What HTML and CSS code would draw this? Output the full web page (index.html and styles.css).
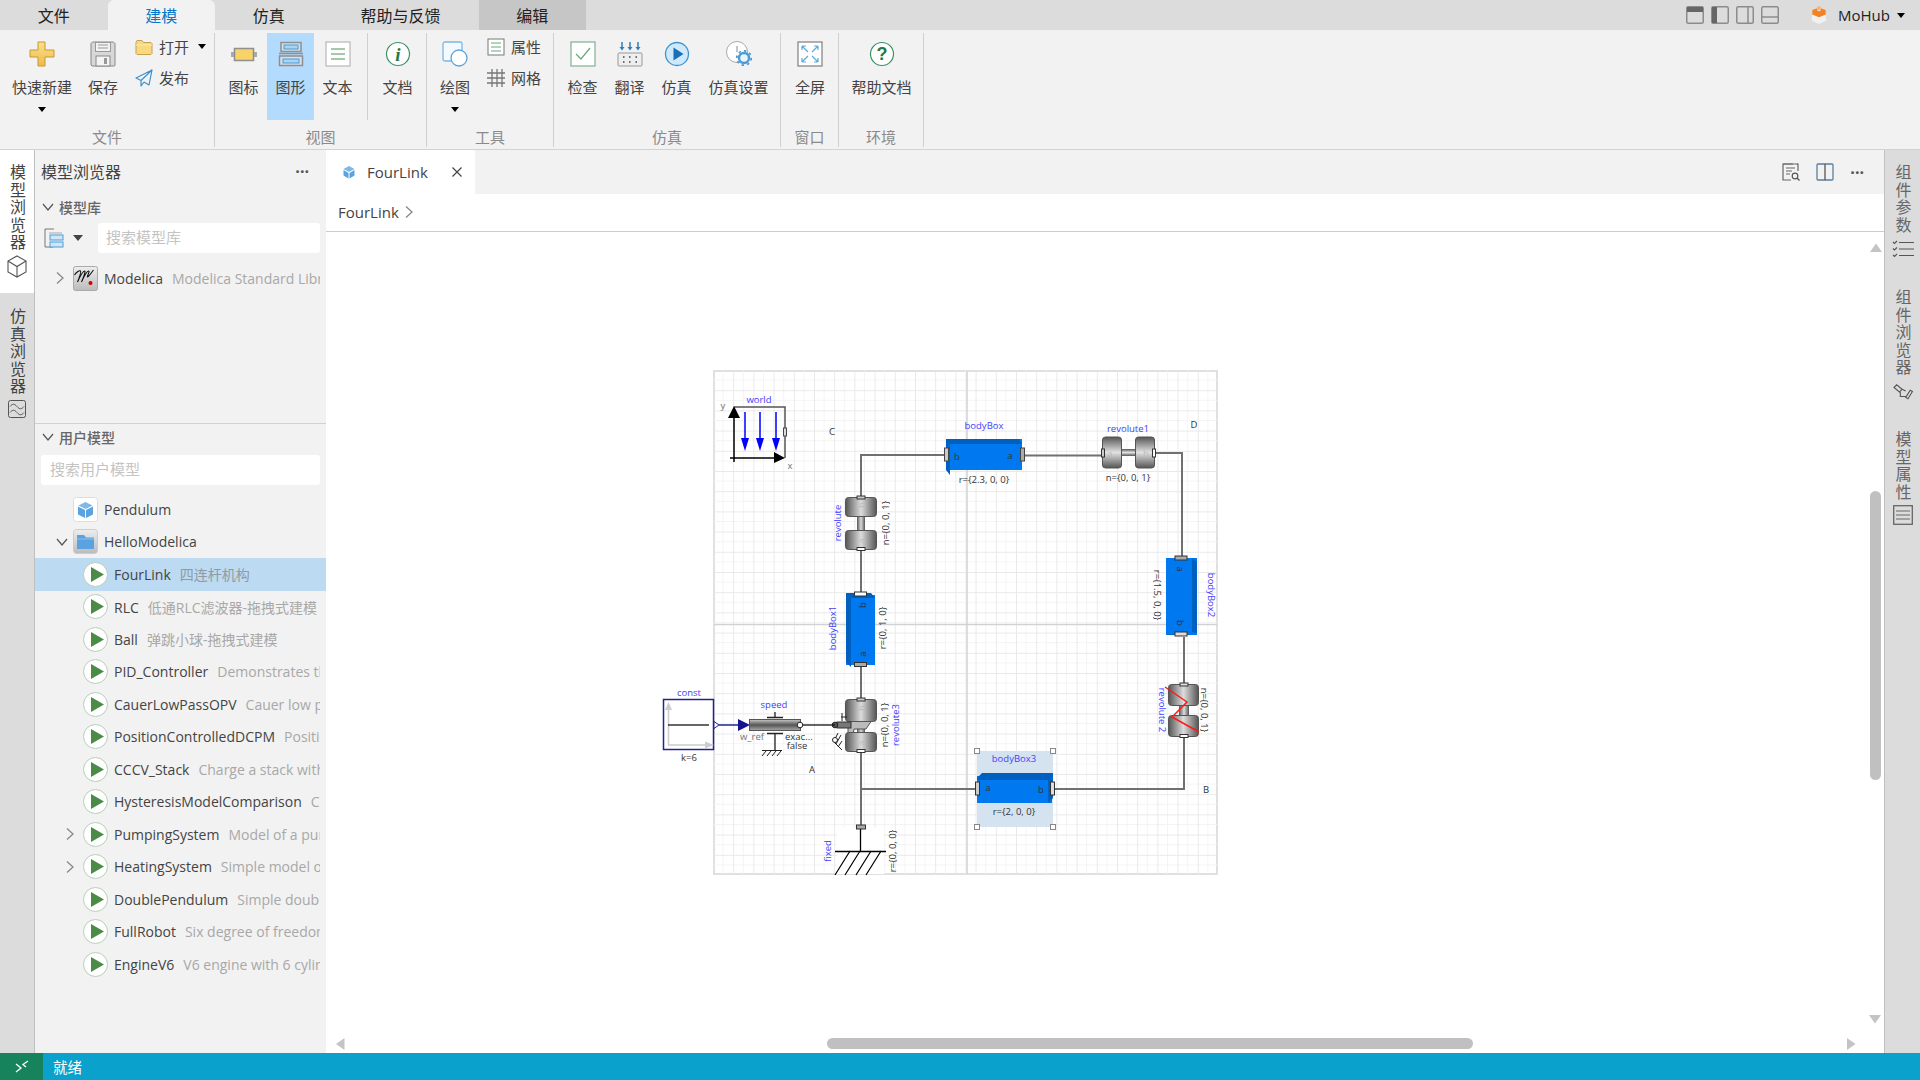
FILE: index.html
```html
<!DOCTYPE html>
<html lang="zh">
<head>
<meta charset="utf-8">
<title>FourLink</title>
<link rel="stylesheet" href="styles.css">
</head>
<body>
<svg class="defs" width="0" height="0">
  <defs>
    <symbol id="play" viewBox="0 0 25 25"><circle cx="12.5" cy="12.5" r="12" fill="#fff" stroke="#b5d0b5"/><path d="M8 5l13 7.5L8 20z" fill="#4a8c47"/></symbol>
    <symbol id="chev-r" viewBox="0 0 10 14"><path d="M2 1.5l6 5.5-6 5.5" fill="none" stroke="#888" stroke-width="1.3"/></symbol>
    <symbol id="chev-d" viewBox="0 0 14 10"><path d="M2 2l5 6 5-6" fill="none" stroke="#555" stroke-width="1.2"/></symbol>
  </defs>
</svg>

<header class="tabbar">
  <div class="tab">文件</div>
  <div class="tab tab-active">建模</div>
  <div class="tab">仿真</div>
  <div class="tab tab-wide">帮助与反馈</div>
  <div class="tab tab-context">编辑</div>
  <div class="tabbar-right">
    <svg class="win-ico" viewBox="0 0 18 18"><rect x=".75" y=".75" width="16.5" height="16.5" rx="1.5" fill="none" stroke="#8c8c8c" stroke-width="1.5"/><rect x="1" y="1" width="16" height="5" fill="#666"/></svg>
    <svg class="win-ico" viewBox="0 0 18 18"><rect x=".75" y=".75" width="16.5" height="16.5" rx="1.5" fill="none" stroke="#8c8c8c" stroke-width="1.5"/><rect x="1" y="1" width="5" height="16" fill="#666"/></svg>
    <svg class="win-ico" viewBox="0 0 18 18"><rect x=".75" y=".75" width="16.5" height="16.5" rx="1.5" fill="none" stroke="#8c8c8c" stroke-width="1.5"/><path d="M12 1v16" stroke="#8c8c8c" stroke-width="1.5"/></svg>
    <svg class="win-ico" viewBox="0 0 18 18"><rect x=".75" y=".75" width="16.5" height="16.5" rx="1.5" fill="none" stroke="#8c8c8c" stroke-width="1.5"/><path d="M1 11h16" stroke="#8c8c8c" stroke-width="1.5"/></svg>
    <svg class="logo" viewBox="0 0 18 20"><path d="M9 7l8 3.500v6L9 20l-8-3.500v-6z" fill="#f1f1f1"/><path d="M1.500 4.500L7 2.500v2.400L9 6l2-1.100V2.500l5.500 2v5l-7.500 3-7.500-3z" fill="#f58220"/><path d="M7 .5h4v3l-2 1-2-1z" fill="#f9b16e"/></svg>
    <span class="hub-name">MoHub</span>
    <span class="caret caret-black"></span>
  </div>
</header>

<section class="ribbon">
  <div class="rgroup rg-file">
    <div class="rgroup-body">
      <div class="rbtn rb-84">
        <svg class="ricon" viewBox="0 0 26 26"><defs><linearGradient id="gold" x1="0" y1="0" x2="0" y2="1"><stop offset="0" stop-color="#fbe08c"/><stop offset="1" stop-color="#eebb4c"/></linearGradient></defs><path d="M9 1h7v8h9v7h-9v9H9v-9H1V9h8z" fill="url(#gold)" stroke="#c9982e"/></svg>
        <span>快速新建</span><span class="caret caret-black caret-mt"></span>
      </div>
      <div class="rbtn rb-38">
        <svg class="ricon" viewBox="0 0 26 26"><path d="M2.500 1h21l1.500 1.500v22l-1 .5H2l-1-1V2.500z" fill="#d8d8d8" stroke="#888"/><rect x="5.500" y="1.500" width="15" height="9" fill="#f2f2f2" stroke="#999"/><path d="M8 4h10M8 7h10" stroke="#999"/><rect x="6" y="15" width="14" height="10" fill="#f4f4f4" stroke="#888"/><rect x="14" y="17" width="3" height="6" fill="#999"/></svg>
        <span>保存</span>
      </div>
      <div class="rsmall-col rs-file">
        <div class="rsmall">
          <svg class="sicon" viewBox="0 0 18 16"><path d="M1 3.500L2 1.500h5l1.500 2H16l1 1v10l-1 1H2l-1-1z" fill="#f8d97f" stroke="#c9a04a"/><path d="M1 6h16" stroke="#fbeab5"/></svg>
          <span>打开</span><span class="caret caret-black caret-ml"></span>
        </div>
        <div class="rsmall">
          <svg class="sicon" viewBox="0 0 18 18"><path d="M17 1L1 9l5 2.500zM17 1L6 11.500V17l3-4M17 1l-3 15-5-3" fill="none" stroke="#3b92d0" stroke-width="1.200" stroke-linejoin="round"/></svg>
          <span>发布</span>
        </div>
      </div>
    </div>
    <div class="rgroup-label">文件</div>
  </div>

  <div class="rgroup rg-view">
    <div class="rgroup-body">
      <div class="rbtn rb-47">
        <svg class="ricon" viewBox="0 0 26 26"><rect x="0" y="11" width="26" height="5" fill="#aaa"/><rect x="3.500" y="7.500" width="19" height="12" fill="#f7d36a" stroke="#8f8f8f" stroke-width="1.500"/></svg>
        <span>图标</span>
      </div>
      <div class="rbtn rb-47 rbtn-on">
        <svg class="ricon" viewBox="0 0 26 26"><path d="M3 1.500h20v9H3zM1.500 15h23v9.500h-23z" fill="#d6e0e8" stroke="#8f8f8f" stroke-width="1.500"/><path d="M1 12.500h24" stroke="#8f8f8f" stroke-width="1.500"/><rect x="6" y="4" width="14" height="4" fill="#a9d4f3" stroke="#4d9bd3"/><rect x="5" y="18" width="16" height="4" fill="#a9d4f3" stroke="#4d9bd3"/></svg>
        <span>图形</span>
      </div>
      <div class="rbtn rb-47">
        <svg class="ricon" viewBox="0 0 26 26"><rect x="1" y="1" width="24" height="24" fill="#fff" stroke="#aaa"/><path d="M6 8h14M6 13h14M6 18h14" stroke="#84b98e" stroke-width="1.300"/></svg>
        <span>文本</span>
      </div>
      <div class="rbtn rb-doc">
        <svg class="ricon" viewBox="0 0 26 26"><circle cx="13" cy="13" r="11.500" fill="#fff" stroke="#3a9162" stroke-width="1.200"/><text x="13" y="19.500" class="ico-i">i</text></svg>
        <span>文档</span>
      </div>
    </div>
    <div class="rgroup-label">视图</div>
  </div>

  <div class="rgroup rg-tool">
    <div class="rgroup-body">
      <div class="rbtn rb-56">
        <svg class="ricon" viewBox="0 0 26 26"><rect x="1" y="1" width="19" height="19" rx="2" fill="#f3f9fe" stroke="#7db6e2" stroke-width="1.300"/><circle cx="17" cy="17" r="8" fill="#fff" stroke="#5ca4da" stroke-width="1.300"/></svg>
        <span>绘图</span><span class="caret caret-black caret-mt"></span>
      </div>
      <div class="rsmall-col rs-tool">
        <div class="rsmall">
          <svg class="sicon" viewBox="0 0 18 18"><rect x="1" y="1" width="16" height="16" fill="#fff" stroke="#777"/><path d="M4 5h10M4 9h10M4 13h10" stroke="#6aa77a" stroke-width="1.200"/></svg>
          <span>属性</span>
        </div>
        <div class="rsmall">
          <svg class="sicon" viewBox="0 0 18 18"><path d="M5 0v18M10 0v18M15 0v18M0 4h18M0 9h18M0 14h18" stroke="#777" stroke-width="1.300"/></svg>
          <span>网格</span>
        </div>
      </div>
    </div>
    <div class="rgroup-label">工具</div>
  </div>

  <div class="rgroup rg-sim">
    <div class="rgroup-body">
      <div class="rbtn rb-47">
        <svg class="ricon" viewBox="0 0 26 26"><rect x="1" y="1" width="24" height="24" fill="#fff" stroke="#7fb28f" stroke-width="1.200"/><path d="M6 13l5 5 9-11" fill="none" stroke="#6aa77a" stroke-width="1.200"/></svg>
        <span>检查</span>
      </div>
      <div class="rbtn rb-47">
        <svg class="ricon" viewBox="0 0 26 26"><path d="M5 1v6M13 1v6M21 1v6" stroke="#2e7fbd" stroke-width="1.500"/><path d="M2.500 6h5L5 9.500zM10.500 6h5L13 9.500zM18.500 6h5L21 9.500z" fill="#2e7fbd"/><rect x="1" y="12" width="24" height="13" rx="1" fill="#eee" stroke="#999"/><path d="M6 16h1.500M12 16h1.500M18.500 16H20M6 21h1.500M12 21h1.500M18.500 21H20" stroke="#444" stroke-width="1.500"/></svg>
        <span>翻译</span>
      </div>
      <div class="rbtn rb-47">
        <svg class="ricon" viewBox="0 0 26 26"><circle cx="13" cy="13" r="11.500" fill="#cfe8fa" stroke="#3d94d2" stroke-width="1.300"/><path d="M9.500 6.500l10 6.500-10 6.500z" fill="#1871b8"/></svg>
        <span>仿真</span>
      </div>
      <div class="rbtn rb-77">
        <svg class="ricon" viewBox="0 0 26 26"><circle cx="11" cy="11" r="10.500" fill="#fff" stroke="#aaa"/><path d="M11 5v6" stroke="#888"/><circle cx="18" cy="17" r="5" fill="#e8f3fb" stroke="#4d9bd3" stroke-width="2.400"/><circle cx="18" cy="17" r="7.200" fill="none" stroke="#4d9bd3" stroke-width="1.800" stroke-dasharray="2.500 3.100"/></svg>
        <span>仿真设置</span>
      </div>
    </div>
    <div class="rgroup-label">仿真</div>
  </div>

  <div class="rgroup rg-win">
    <div class="rgroup-body">
      <div class="rbtn rb-fill">
        <svg class="ricon" viewBox="0 0 26 26"><rect x="1" y="1" width="24" height="24" fill="#fff" stroke="#888" stroke-width="1.300"/><path d="M5 5l6 6M21 5l-6 6M5 21l6-6M21 21l-6-6M5 5h4M5 5v4M21 5h-4M21 5v4M5 21h4M5 21v-4M21 21h-4M21 21v-4" fill="none" stroke="#5aaade" stroke-width="1.200"/></svg>
        <span>全屏</span>
      </div>
    </div>
    <div class="rgroup-label">窗口</div>
  </div>

  <div class="rgroup rg-env">
    <div class="rgroup-body">
      <div class="rbtn rb-fill">
        <svg class="ricon" viewBox="0 0 26 26"><circle cx="13" cy="13" r="11.500" fill="#fff" stroke="#3a9162" stroke-width="1.200"/><text x="13" y="19" class="ico-q">?</text></svg>
        <span>帮助文档</span>
      </div>
    </div>
    <div class="rgroup-label">环境</div>
  </div>
</section>

<div class="workspace">
  <aside class="rail-left">
    <div class="rail-item rail-item-on">
      <div class="vtext">模型浏览器</div>
      <svg class="rail-ico-cube" viewBox="0 0 20 23"><path d="M10 1l9 5v11l-9 5-9-5V6zM1 6l9 5.500L19 6M10 11.500V22" fill="none" stroke="#555" stroke-width="1.100"/></svg>
    </div>
    <div class="rail-item">
      <div class="vtext">仿真浏览器</div>
      <svg class="rail-ico-wave" viewBox="0 0 18 18"><rect x=".5" y=".5" width="17" height="17" rx="2" fill="none" stroke="#555"/><path d="M2 6.500c2.500-3 4.500-3 7 0s4.500 3 7 0M2 12.500c2.500-3 4.500-3 7 0s4.500 3 7 0" fill="none" stroke="#555"/></svg>
    </div>
  </aside>

  <aside class="panel">
    <div class="panel-head">
      <span class="panel-title">模型浏览器</span>
      <span class="dots">···</span>
    </div>
    <div class="panel-lib">
      <div class="sec-head"><svg class="chev-d"><use href="#chev-d"/></svg><span>模型库</span></div>
      <div class="lib-tools">
        <svg class="lib-ico" viewBox="0 0 20 20"><path d="M10 1H1v18h8" fill="none" stroke="#777"/><path d="M5 5h13" stroke="#aaa"/><rect x="6" y="7" width="13" height="5" fill="#cfe6f8" stroke="#4d9bd3"/><rect x="6" y="14" width="13" height="5" fill="#cfe6f8" stroke="#4d9bd3"/></svg>
        <span class="caret caret-dark"></span>
        <div class="search search-lib">搜索模型库</div>
      </div>
      <div class="tree tree-lib">
        <div class="row row-l1">
          <svg class="chev-r"><use href="#chev-r"/></svg>
          <svg class="node-ico" viewBox="0 0 25 25"><defs><linearGradient id="tile" x1="0" y1="0" x2="0" y2="1"><stop offset="0" stop-color="#eee"/><stop offset="1" stop-color="#bbb"/></linearGradient></defs><rect x=".5" y=".5" width="24" height="24" rx="2" fill="url(#tile)" stroke="#aaa"/><path d="M1.500 9c2-3 5-5 6-4s-3 11-3 11 5-11 7-11-3 11-3 11 5-11 7-11-2 6-1 6 3-3 6-7" fill="none" stroke="#111" stroke-width="1.100"/><circle cx="17.500" cy="17" r="2" fill="#c00"/></svg>
          <div class="row-text"><span class="name">Modelica</span><span class="desc">Modelica Standard Library - Version 4.0.0</span></div>
        </div>
      </div>
    </div>
    <div class="panel-user">
      <div class="sec-head sec-head-user"><svg class="chev-d"><use href="#chev-d"/></svg><span>用户模型</span></div>
      <div class="search search-user">搜索用户模型</div>
      <div class="tree tree-user">
        <div class="row row-l1">
          <span class="chev-gap"></span>
          <svg class="node-ico" viewBox="0 0 25 25"><rect x=".5" y=".5" width="24" height="24" rx="3" fill="#fff" stroke="#ddd"/><path d="M12.500 5l7 3.500-7 3.500-7-3.500z" fill="#7db8e8"/><path d="M5 9.500l7 3.500v8l-7-3.500zM20 9.500L13 13v8l7-3.500z" fill="#5ba3e0"/></svg>
          <div class="row-text"><span class="name">Pendulum</span></div>
        </div>
        <div class="row row-l1">
          <svg class="chev-d chev-dark"><use href="#chev-d"/></svg>
          <svg class="node-ico" viewBox="0 0 25 25"><rect x=".5" y=".5" width="24" height="24" rx="3" fill="url(#tile)" stroke="#ccc"/><path d="M4 6h7l2 2.500h8V20H4z" fill="#5ba3e0"/><path d="M4 10h17" stroke="#8cc1ec"/></svg>
          <div class="row-text"><span class="name">HelloModelica</span></div>
        </div>
        <div class="row row-l2 row-sel"><svg class="node-ico"><use href="#play"/></svg><div class="row-text"><span class="name">FourLink</span><span class="desc">四连杆机构</span></div></div>
        <div class="row row-l2"><svg class="node-ico"><use href="#play"/></svg><div class="row-text"><span class="name">RLC</span><span class="desc">低通RLC滤波器-拖拽式建模</span></div></div>
        <div class="row row-l2"><svg class="node-ico"><use href="#play"/></svg><div class="row-text"><span class="name">Ball</span><span class="desc">弹跳小球-拖拽式建模</span></div></div>
        <div class="row row-l2"><svg class="node-ico"><use href="#play"/></svg><div class="row-text"><span class="name">PID_Controller</span><span class="desc">Demonstrates the usage of a Continuous.LimPID controller</span></div></div>
        <div class="row row-l2"><svg class="node-ico"><use href="#play"/></svg><div class="row-text"><span class="name">CauerLowPassOPV</span><span class="desc">Cauer low pass filter with operational amplifiers</span></div></div>
        <div class="row row-l2"><svg class="node-ico"><use href="#play"/></svg><div class="row-text"><span class="name">PositionControlledDCPM</span><span class="desc">Position control of a DC motor</span></div></div>
        <div class="row row-l2"><svg class="node-ico"><use href="#play"/></svg><div class="row-text"><span class="name">CCCV_Stack</span><span class="desc">Charge a stack with constant current</span></div></div>
        <div class="row row-l2"><svg class="node-ico"><use href="#play"/></svg><div class="row-text"><span class="name">HysteresisModelComparison</span><span class="desc">Comparison of hysteresis models</span></div></div>
        <div class="row row-l2x"><svg class="chev-r"><use href="#chev-r"/></svg><svg class="node-ico"><use href="#play"/></svg><div class="row-text"><span class="name">PumpingSystem</span><span class="desc">Model of a pumping system for drinking water</span></div></div>
        <div class="row row-l2x"><svg class="chev-r"><use href="#chev-r"/></svg><svg class="node-ico"><use href="#play"/></svg><div class="row-text"><span class="name">HeatingSystem</span><span class="desc">Simple model of a heating system</span></div></div>
        <div class="row row-l2"><svg class="node-ico"><use href="#play"/></svg><div class="row-text"><span class="name">DoublePendulum</span><span class="desc">Simple double pendulum with two revolute joints</span></div></div>
        <div class="row row-l2"><svg class="node-ico"><use href="#play"/></svg><div class="row-text"><span class="name">FullRobot</span><span class="desc">Six degree of freedom robot with path planning</span></div></div>
        <div class="row row-l2"><svg class="node-ico"><use href="#play"/></svg><div class="row-text"><span class="name">EngineV6</span><span class="desc">V6 engine with 6 cylinders</span></div></div>
      </div>
    </div>
  </aside>

  <main class="main">
    <div class="doc-tabs">
      <div class="doc-tab">
        <svg class="doc-tab-ico" viewBox="0 0 14 14"><path d="M7 1l5.500 3L7 7 1.500 4z" fill="#7db8e8"/><path d="M1.500 5L6.500 8v5.500L1.500 10.500zM12.500 5L7.500 8v5.500l5-3z" fill="#5ba3e0"/></svg>
        <span class="doc-tab-name">FourLink</span>
        <svg class="doc-tab-x" viewBox="0 0 12 12"><path d="M1.500 1.500l9 9M10.500 1.500l-9 9" stroke="#444" stroke-width="1.200"/></svg>
      </div>
      <div class="doc-tools">
        <svg class="tool-ico" viewBox="0 0 18 18"><path d="M11 1H1v16h8M15 1h1v7" fill="none" stroke="#666" stroke-width="1.200"/><path d="M1 1h15M4 5h9M4 8h6M4 11h4" stroke="#666" stroke-width="1.200"/><circle cx="13" cy="13" r="2.800" fill="none" stroke="#555" stroke-width="1.200"/><path d="M15 15l2.500 2.500" stroke="#555" stroke-width="1.400"/></svg>
        <svg class="tool-ico" viewBox="0 0 18 18"><rect x="1" y="1" width="16" height="16" rx="1" fill="none" stroke="#5b7f9c" stroke-width="1.300"/><path d="M9 1v16" stroke="#555" stroke-width="1.300"/></svg>
        <span class="dots">···</span>
      </div>
    </div>
    <div class="crumb"><span>FourLink</span><svg class="crumb-chev"><use href="#chev-r"/></svg></div>
    <div class="canvas">
      <svg class="diagram" viewBox="326 232 1558 821" width="1558" height="821">
        <defs>
          <pattern id="grid" x="713" y="370" width="20.2" height="20.2" patternUnits="userSpaceOnUse">
            <path d="M10.100 0v20.200M0 10.100h20.200" stroke="#f4f4f4" fill="none"/>
            <path d="M.5 0v20.200M0 .5h20.200" stroke="#e9e9e9" fill="none"/>
          </pattern>
          <linearGradient id="gv" x1="0" y1="0" x2="0" y2="1"><stop offset="0" stop-color="#555"/><stop offset=".5" stop-color="#e2e2e2"/><stop offset="1" stop-color="#555"/></linearGradient>
          <linearGradient id="gh" x1="0" y1="0" x2="1" y2="0"><stop offset="0" stop-color="#555"/><stop offset=".5" stop-color="#dcdcdc"/><stop offset="1" stop-color="#555"/></linearGradient>
          <linearGradient id="gs" x1="0" y1="0" x2="0" y2="1"><stop offset="0" stop-color="#c8c8c8"/><stop offset=".5" stop-color="#555"/><stop offset="1" stop-color="#aaa"/></linearGradient>
        </defs>

        <rect x="714" y="371" width="503" height="503" fill="#fff" stroke="#e0e0e0" stroke-width="2"/>
        <rect x="714" y="371" width="503" height="503" fill="url(#grid)"/>
        <path d="M967 371v503M714 624.500h503" stroke="#d2d2d2" stroke-width="1.500"/>

        <!-- wires -->
        <g fill="none" stroke="#707070" stroke-width="2">
          <path d="M861 497V455H945"/>
          <path d="M1024 455.500H1102"/>
          <path d="M1154 453H1182V557"/>
          <path d="M1184 637V684"/>
          <path d="M1184 736V789H1054"/>
          <path d="M861 550V593"/>
          <path d="M861 666V699"/>
          <path d="M861 752V825"/>
          <path d="M861 789H976"/>
        </g>

        <!-- world -->
        <path d="M734 407H785V458" fill="none" stroke="#555" stroke-width="1.500"/>
        <path d="M734 412V462M730 458H775" stroke="#000" stroke-width="1.500"/>
        <path d="M734 406l-6 12h12zM774 452l11 6-11 5z" fill="#000"/>
        <path d="M745 412v28M760 412v28M776 412v28" stroke="#0000ff" stroke-width="1.500"/>
        <path d="M741 438h8l-4 13zM756 438h8l-4 13zM772 438h8l-4 13z" fill="#0000ff"/>
        <rect x="783.500" y="428" width="3" height="8" fill="#ddd" stroke="#444"/>
        <text x="759" y="403" class="t-b mid">world</text>
        <text x="723" y="409" class="t-g mid">y</text>
        <text x="790" y="469" class="t-g mid">x</text>
        <text x="832" y="435" class="t-k mid">C</text>
        <text x="1194" y="428" class="t-k mid">D</text>
        <text x="812" y="773" class="t-k mid">A</text>
        <text x="1206" y="793" class="t-k mid">B</text>

        <!-- bodyBox -->
        <rect x="946" y="439" width="76" height="31" fill="#0078f0"/>
        <path d="M946 439h73l3 5h-72zM946 439l4 5v31l-4-5z" fill="#0060c0"/>
        <rect x="944.500" y="448" width="4" height="13" fill="#ccc" stroke="#444"/>
        <rect x="1020.500" y="448" width="4" height="13" fill="#aaa" stroke="#444"/>
        <text x="957" y="460" class="t-k mid">b</text>
        <text x="1010" y="459" class="t-k mid">a</text>
        <text x="984" y="429" class="t-b mid">bodyBox</text>
        <text x="984" y="483" class="t-k mid">r={2.3, 0, 0}</text>

        <!-- revolute1 -->
        <rect x="1120" y="449" width="16" height="7" fill="url(#gv)"/>
        <rect x="1102.500" y="437" width="19" height="31" rx="3" fill="url(#gv)" stroke="#555"/>
        <rect x="1135.500" y="437" width="19" height="31" rx="3" fill="url(#gv)" stroke="#555"/>
        <rect x="1101.500" y="449" width="3" height="8" fill="#ccc" stroke="#333"/>
        <rect x="1152.500" y="449" width="3" height="8" fill="#fff" stroke="#333"/>
        <text x="1110" y="457" class="t-w mid">a</text>
        <text x="1146" y="457" class="t-w mid">b</text>
        <text x="1128" y="432" class="t-b mid">revolute1</text>
        <text x="1128" y="481" class="t-k mid">n={0, 0, 1}</text>

        <!-- bodyBox2 -->
        <rect x="1166" y="558" width="31" height="77" fill="#0078f0"/>
        <path d="M1192 558l5 4v71l-5-1zM1166 634l5 1h26l-3 0z" fill="#0060c0"/>
        <rect x="1175" y="556" width="12" height="4" fill="#aaa" stroke="#333"/>
        <rect x="1175" y="632" width="12" height="4" fill="#ddd" stroke="#333"/>
        <text transform="translate(1177 569) rotate(90)" class="t-k mid">a</text>
        <text transform="translate(1177 623) rotate(90)" class="t-k mid">b</text>
        <text transform="translate(1154 595) rotate(90)" class="t-k mid">r={1.5, 0, 0}</text>
        <text transform="translate(1208 595) rotate(90)" class="t-b mid">bodyBox2</text>

        <!-- revolute2 -->
        <rect x="1179" y="704" width="10" height="12" fill="url(#gh)"/>
        <rect x="1168.500" y="684.500" width="30" height="21" rx="3" fill="url(#gh)" stroke="#555"/>
        <rect x="1168.500" y="715.500" width="30" height="21" rx="3" fill="url(#gh)" stroke="#555"/>
        <rect x="1180" y="683" width="8" height="3" fill="#ddd" stroke="#333"/>
        <rect x="1180" y="734.500" width="8" height="3" fill="#fff" stroke="#333"/>
        <path d="M1165 687L1187 702L1172 717L1199 732" fill="none" stroke="#ff1a1a" stroke-width="1.500"/>
        <text transform="translate(1159 710) rotate(90)" class="t-b mid">revolute 2</text>
        <text transform="translate(1201 710) rotate(90)" class="t-k mid">n={0, 0, 1}</text>

        <!-- bodyBox3 selected -->
        <rect x="977" y="751" width="76" height="76" fill="#d5e3f1"/>
        <rect x="977" y="776" width="75" height="27" fill="#0078f0"/>
        <path d="M977 778l5-5h71l-5 7h-71zM1048 780l5-7v25l-5 5z" fill="#0060c0"/>
        <rect x="975.500" y="782" width="4" height="13" fill="#ccc" stroke="#333"/>
        <rect x="1050.500" y="782" width="4" height="13" fill="#ddd" stroke="#333"/>
        <text x="988" y="791" class="t-k mid">a</text>
        <text x="1041" y="793" class="t-k mid">b</text>
        <text x="1014" y="762" class="t-b mid">bodyBox3</text>
        <text x="1014" y="815" class="t-k mid">r={2, 0, 0}</text>
        <g fill="#fff" stroke="#888">
          <rect x="974.500" y="748.500" width="5" height="5"/><rect x="1050.500" y="748.500" width="5" height="5"/>
          <rect x="974.500" y="824.500" width="5" height="5"/><rect x="1050.500" y="824.500" width="5" height="5"/>
        </g>

        <!-- revolute -->
        <rect x="857" y="515" width="8" height="16" fill="url(#gh)"/>
        <rect x="845.500" y="497.500" width="31" height="19" rx="3" fill="url(#gh)" stroke="#555"/>
        <rect x="845.500" y="530.500" width="31" height="19" rx="3" fill="url(#gh)" stroke="#555"/>
        <rect x="857" y="496" width="8" height="3" fill="#ccc" stroke="#333"/>
        <rect x="857" y="547.500" width="8" height="3" fill="#fff" stroke="#333"/>
        <text transform="translate(865 505) rotate(-90)" class="t-w mid">b</text>
        <text transform="translate(865 541) rotate(-90)" class="t-w mid">a</text>
        <text transform="translate(841 523) rotate(-90)" class="t-b mid">revolute</text>
        <text transform="translate(889 523) rotate(-90)" class="t-k mid">n={0, 0, 1}</text>

        <!-- bodyBox1 -->
        <rect x="846" y="595" width="29" height="70" fill="#0078f0"/>
        <path d="M846 593h25l4 5h-24v69l-5-5z" fill="#0060c0"/>
        <rect x="854.500" y="592" width="12" height="4" fill="#fff" stroke="#333"/>
        <rect x="854.500" y="662.500" width="12" height="4" fill="#aaa" stroke="#333"/>
        <text transform="translate(866 605) rotate(-90)" class="t-k mid">b</text>
        <text transform="translate(866 654) rotate(-90)" class="t-k mid">a</text>
        <text transform="translate(836 628) rotate(-90)" class="t-b mid">bodyBox1</text>
        <text transform="translate(886 628) rotate(-90)" class="t-k mid">r={0, 1, 0}</text>

        <!-- revolute3 -->
        <rect x="857" y="720" width="8" height="14" fill="url(#gh)"/>
        <path d="M848 720h24l-6 9h-12l-3 15h-3z" fill="#bbb" stroke="#555"/>
        <rect x="845.500" y="699.500" width="31" height="22" rx="3" fill="url(#gh)" stroke="#555"/>
        <rect x="845.500" y="732.500" width="31" height="19" rx="3" fill="url(#gh)" stroke="#555"/>
        <rect x="857" y="698" width="8" height="3" fill="#ccc" stroke="#333"/>
        <rect x="857" y="749.500" width="8" height="3" fill="#fff" stroke="#333"/>
        <text transform="translate(865 708) rotate(-90)" class="t-w mid">b</text>
        <text transform="translate(865 743) rotate(-90)" class="t-w mid">a</text>
        <text transform="translate(888 725) rotate(-90)" class="t-k mid">n={0, 0, 1}</text>
        <text transform="translate(899 725) rotate(-90)" class="t-b mid">revolute3</text>
        <rect x="837" y="722" width="14" height="6" fill="#777" stroke="#333"/>
        <circle cx="835" cy="725" r="2.800" fill="#555" stroke="#222"/>
        <path d="M842 713v8M847 717h-6M838 733l-4 8M841 735l-5 9M834 742l8 8M842 741l-4 6" stroke="#222" fill="none"/>
        <circle cx="835" cy="740" r="2.500" fill="#fff" stroke="#222"/>

        <!-- fixed -->
        <rect x="837" y="828" width="47" height="46" fill="#fff"/>
        <rect x="856.500" y="825" width="9" height="4" fill="#aaa" stroke="#333"/>
        <path d="M860.500 829V851M835 851.500H886" stroke="#000" stroke-width="1.300"/>
        <path d="M850 851l-15 24M860 851l-15 24M871 851l-15 24M881 851l-15 24" stroke="#000" stroke-width="1.200"/>
        <text transform="translate(831 851) rotate(-90)" class="t-b mid">fixed</text>
        <text transform="translate(896 851) rotate(-90)" class="t-k mid">r={0, 0, 0}</text>

        <!-- const -->
        <rect x="663.500" y="699.500" width="50" height="50" fill="#fff" stroke="#23238e" stroke-width="1.500"/>
        <path d="M668.500 708V745H709" fill="none" stroke="#ccc" stroke-width="1.500"/>
        <path d="M668.500 702l-3.500 8h7zM714 745l-9-3.500v7z" fill="#ccc"/>
        <path d="M668 725h41" stroke="#333" stroke-width="1.300"/>
        <path d="M714 721.500l5 3.500-5 3.500z" fill="#fff" stroke="#23238e"/>
        <path d="M719 725H740" stroke="#23238e" stroke-width="1.500"/>
        <path d="M738 719l12 6-12 6z" fill="#14148e"/>
        <text x="689" y="696" class="t-b mid">const</text>
        <text x="689" y="761" class="t-k mid">k=6</text>

        <!-- speed -->
        <rect x="749.500" y="719.500" width="51" height="11" fill="url(#gs)" stroke="#555"/>
        <circle cx="800" cy="725" r="2.800" fill="#fff" stroke="#222"/>
        <path d="M803 725H835" stroke="#111" stroke-width="1.300"/>
        <path d="M775 712v5M767 717.500h16M767 733.500h16M775 733v17" stroke="#222" stroke-width="1.300"/>
        <path d="M762 750.500h20M766 751l-4 5M771 751l-4 5M776 751l-4 5M781 751l-4 5" stroke="#222"/>
        <text x="774" y="708" class="t-b mid">speed</text>
        <text x="740" y="740" class="t-g">w_ref</text>
        <text x="785" y="740" class="t-k">exac...</text>
        <text x="797" y="749" class="t-k mid">false</text>
      </svg>
      <svg class="sb-arrow sb-up" viewBox="0 0 12 9"><path d="M6 0.500L12 9H0z" fill="#c4c4c4"/></svg>
      <svg class="sb-arrow sb-down" viewBox="0 0 12 9"><path d="M0 0h12L6 8.500z" fill="#c4c4c4"/></svg>
      <svg class="sb-arrow sb-left" viewBox="0 0 9 12"><path d="M8.500 0v12L0 6z" fill="#c4c4c4"/></svg>
      <svg class="sb-arrow sb-right" viewBox="0 0 9 12"><path d="M0 0l8.500 6L0 12z" fill="#c4c4c4"/></svg>
      <div class="sb-thumb sb-thumb-v"></div>
      <div class="sb-thumb sb-thumb-h"></div>
    </div>
  </main>

  <aside class="rail-right">
    <div class="rail-r-item rr-a">
      <div class="vtext">组件参数</div>
      <svg class="rail-r-ico" viewBox="0 0 22 18"><path d="M7 2.500h15M7 9h15M7 15.500h15" stroke="#555" stroke-width="1.200"/><path d="M1 2l1.500 1.500L5 1M1 8.500L2.500 10 5 7.500M1 15l1.500 1.500L5 14" fill="none" stroke="#555" stroke-width="1.100"/></svg>
    </div>
    <div class="rail-r-item rr-b">
      <div class="vtext">组件浏览器</div>
      <svg class="rail-r-ico" viewBox="0 0 22 20"><path d="M1 5l3-3 6 5-3 3zM14 16l5-8 2.500 1.500-5 8zM8 10v5h6M10 7l4 2" fill="none" stroke="#555" stroke-width="1.200"/></svg>
    </div>
    <div class="rail-r-item rr-c">
      <div class="vtext">模型属性</div>
      <svg class="rail-r-ico rr-ico-c" viewBox="0 0 20 20"><rect x=".7" y=".7" width="18.600" height="18.600" fill="none" stroke="#666" stroke-width="1.300"/><path d="M3 6h14M3 10h14M3 14h14" stroke="#666"/></svg>
    </div>
  </aside>
</div>

<footer class="status">
  <div class="status-remote"><svg viewBox="0 0 14 14" class="remote-ico"><path d="M1 4l5 4-5 4M13 1L8 4.500l3 2.500" fill="none" stroke="#fff" stroke-width="1.300"/></svg></div>
  <span class="status-text">就绪</span>
</footer>
</body>
</html>
```

FILE: styles.css
```css
* { box-sizing: border-box; }
html, body { margin: 0; height: 100%; }
body {
  width: 1920px; height: 1080px; overflow: hidden;
  display: flex; flex-direction: column;
  font-family: "Open Sans", "Noto Sans CJK SC", sans-serif;
  color: #444; background: #fff;
}
.defs { position: absolute; }
svg { display: block; flex: none; }

/* Top tabs */
.tabbar { height: 30px; background: #dcdcdc; display: flex; flex: none; font-size: 16px; color: #222; }
.tab { width: 107.500px; display: flex; align-items: center; justify-content: center; }
.tab-wide { width: 156px; }
.tab-active { background: #f2f2f2; color: #0a78c8; border-radius: 6px 6px 0 0; }
.tab-context { background: #c6c6c6; }
.tabbar-right { margin-left: auto; display: flex; align-items: center; padding-right: 15px; }
.win-ico { width: 18px; height: 18px; margin-right: 7px; }
.logo { width: 16px; height: 18px; margin-left: 25px; margin-right: 11px; }
.hub-name { font-size: 15px; color: #222; width: 59px; }
.caret { display: inline-block; width: 0; height: 0; border-left: 4.500px solid transparent; border-right: 4.500px solid transparent; border-top: 5px solid #000; flex: none; }
.caret-dark { border-top-color: #444; border-left-width: 5px; border-right-width: 5px; border-top-width: 6px; margin-left: 9px; margin-right: 15px; }
.caret-mt { margin-top: 10px; }
.caret-ml { margin-left: 9px; }

/* Ribbon */
.ribbon { height: 120px; flex: none; background: #f2f2f2; border-bottom: 1px solid #d2d2d2; display: flex; }
.rgroup { position: relative; display: flex; flex-direction: column; flex: none; }
.rgroup::after { content: ""; position: absolute; right: 0; top: 3px; bottom: 2px; width: 1px; background: #d0d0d0; }
.rg-file { width: 215px; }
.rg-view { width: 212px; }
.rg-tool { width: 127px; }
.rg-sim { width: 227px; }
.rg-win { width: 58px; }
.rg-env { width: 85px; }
.rg-view .rgroup-body, .rg-sim .rgroup-body { padding-left: 5px; }
.rgroup-body { height: 87px; margin-top: 3px; display: flex; flex: none; }
.rgroup-label { font-size: 15px; line-height: 20px; margin-top: 7px; padding-right: 1px; text-align: center; color: #8a8a8a; }
.rbtn { display: flex; flex-direction: column; align-items: center; font-size: 15px; line-height: 20px; padding-top: 8px; color: #444; flex: none; }
.rbtn > span:not(.caret) { margin-top: 9.500px; white-space: nowrap; }
.ricon { width: 26px; height: 26px; }
.rb-84 { width: 84px; }
.rb-38 { width: 38px; }
.rb-47 { width: 47px; }
.rb-56 { width: 56px; }
.rb-77 { width: 77px; }
.rb-doc { width: 60px; margin-left: 6px; position: relative; border-left: 1px solid #d0d0d0; }
.rb-fill { flex: 1; }
.rbtn-on { background: #b3dbfd; }
.ico-i { font-family: "Liberation Serif", serif; font-style: italic; font-weight: 700; font-size: 19px; fill: #1d7a4a; text-anchor: middle; }
.ico-q { font-family: "Liberation Sans", sans-serif; font-weight: 700; font-size: 18px; fill: #1d7a4a; text-anchor: middle; }
.rsmall-col { display: flex; flex-direction: column; gap: 12px; padding-top: 4px; font-size: 15px; }
.rs-file { margin-left: 13px; }
.rs-tool { margin-left: 4px; }
.rsmall { display: flex; align-items: center; height: 19px; white-space: nowrap; }
.rsmall > span:not(.caret) { margin-left: 6px; }
.sicon { width: 18px; height: 18px; }

/* Workspace */
.workspace { flex: 1; display: flex; min-height: 0; }

.rail-left { width: 35px; flex: none; background: #dcdcdc; border-right: 1px solid #c0c0c0; }
.rail-item { display: flex; flex-direction: column; align-items: center; height: 143px; padding-top: 14px; color: #444; }
.rail-item-on { background: #fff; }
.rail-item:not(.rail-item-on) { padding-top: 15px; }
.vtext { writing-mode: vertical-rl; text-orientation: upright; font-size: 16px; line-height: 18px; letter-spacing: 1.500px; }
.rail-ico-cube { width: 20px; height: 23px; margin-top: 3px; }
.rail-ico-wave { width: 18px; height: 18px; margin-top: 4px; }

.panel { width: 291px; flex: none; background: #f2f2f2; display: flex; flex-direction: column; }
.panel-head { height: 42px; padding: 0 17px 0 6px; display: flex; align-items: center; justify-content: space-between; }
.panel-title { font-size: 16px; color: #444; }
.dots { font-size: 16px; font-weight: 700; letter-spacing: 0; color: #555; line-height: 1; }
.panel-lib { height: 232px; border-bottom: 1px solid #d2d2d2; flex: none; }
.sec-head { height: 29px; margin-bottom: 2px; display: flex; align-items: center; padding-left: 6px; font-size: 14px; font-weight: 500; color: #666; }
.sec-head-user { height: 25px; margin-bottom: 0; }
.sec-head .chev-d { margin-right: 4px; }
.chev-d { width: 14px; height: 10px; }
.row .chev-dark { margin: 0 4px 0 0; width: 14px; }
.chev-r { width: 10px; height: 14px; margin-right: 8px; }
.chev-gap { width: 18px; flex: none; }
.lib-tools { display: flex; align-items: center; margin-top: 1px; padding-left: 9px; height: 30px; }
.lib-ico { width: 20px; height: 20px; }
.search { background: #fff; border-radius: 3px; height: 30px; line-height: 28px; font-size: 15px; color: #c4c4c4; }
.search-lib { width: 222px; padding-left: 8px; }
.search-user { width: 279px; margin: 6px 0 0 6px; padding-left: 9px; }
.tree-lib { margin-top: 9px; }
.tree-user { margin-top: 8px; }
.row { height: 32.500px; display: flex; align-items: center; padding-right: 6px; font-size: 14px; }
.row-l1 { padding-left: 20px; }
.row-l2 { padding-left: 48px; }
.row-l2x { padding-left: 30px; }
.row-sel { background: #bcdaf2; }
.node-ico { width: 25px; height: 25px; flex: none; }
.row-text { flex: 1; min-width: 0; overflow: hidden; white-space: nowrap; padding-left: 6px; }
.name { color: #444; margin-right: 9px; }
.desc { color: #a8a8a8; }
.row-sel .desc { color: #8f9aa3; }

.main { flex: 1; min-width: 0; display: flex; flex-direction: column; background: #fff; }
.doc-tabs { height: 44px; flex: none; background: #f2f2f2; display: flex; align-items: stretch; justify-content: space-between; }
.doc-tab { width: 149px; background: #fff; display: flex; align-items: center; padding-left: 16px; font-size: 15px; color: #444; }
.doc-tab-ico { width: 14px; height: 14px; }
.doc-tab-name { margin-left: 11px; }
.doc-tab-x { width: 12px; height: 12px; margin-left: auto; margin-right: 12px; }
.doc-tools { display: flex; align-items: center; padding-right: 20px; }
.tool-ico { width: 18px; height: 18px; margin-right: 16px; }
.crumb { height: 38px; flex: none; border-bottom: 1px solid #ccc; display: flex; align-items: center; padding: 0 0 2px 12px; font-size: 15px; }
.crumb-chev { width: 10px; height: 14px; margin-left: 5px; }
.canvas { flex: 1; position: relative; overflow: hidden; min-height: 0; }
.diagram { position: absolute; left: 0; top: 0; }
.diagram text { font-family: "Open Sans", sans-serif; font-size: 9.500px; }
.mid { text-anchor: middle; }
.t-b { fill: #3f3fff; }
.t-k { fill: #333; }
.t-g { fill: #707070; }
.t-w { fill: #bbb; }
.sb-arrow { position: absolute; }
.sb-up { width: 12px; height: 9px; left: 1544px; top: 11px; }
.sb-down { width: 12px; height: 9px; left: 1543px; top: 783px; }
.sb-left { width: 9px; height: 12px; left: 10px; top: 806px; }
.sb-right { width: 9px; height: 12px; left: 1521px; top: 806px; }
.sb-thumb { position: absolute; background: #c0c0c0; border-radius: 6px; }
.sb-thumb-v { width: 11px; height: 289px; left: 1544px; top: 259px; }
.sb-thumb-h { height: 11px; width: 646px; left: 501px; top: 806px; }

.rail-right { width: 36px; flex: none; background: #dcdcdc; border-left: 1px solid #c0c0c0; display: flex; flex-direction: column; align-items: center; color: #666; }
.rail-r-item { display: flex; flex-direction: column; align-items: center; }
.rr-a { margin-top: 14px; }
.rr-b { margin-top: 31px; }
.rr-c { margin-top: 30px; }
.rail-r-ico { width: 22px; height: 18px; margin-top: 6px; }
.rr-ico-c { width: 20px; height: 20px; margin-top: 4px; }

.status { height: 27px; flex: none; background: #0aa1cd; display: flex; align-items: center; padding-bottom: 1px; color: #fff; font-size: 14.500px; }
.status-remote { width: 43px; height: 27px; margin-bottom: -1px; background: #17835c; display: flex; align-items: center; justify-content: center; }
.remote-ico { width: 14px; height: 14px; }
.status-text { margin-left: 10px; }
```
